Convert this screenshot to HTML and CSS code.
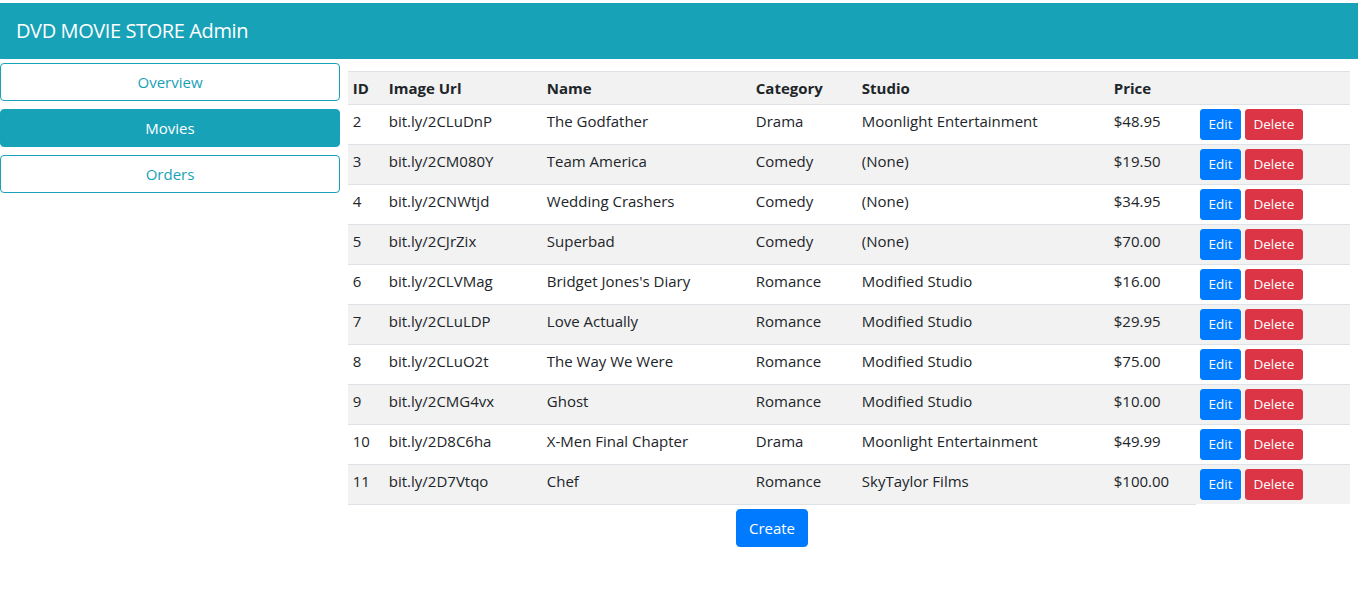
FILE: index.html
```html
<!DOCTYPE html>
<html>
<head>
<meta charset="utf-8">
<link rel="stylesheet" href="styles.css">
</head>
<body>
<div class="page">
  <header class="topbar"><span class="brand">DVD MOVIE STORE Admin</span></header>
  <div class="layout">
    <nav class="side">
      <a class="navbtn outline">Overview</a>
      <a class="navbtn active">Movies</a>
      <a class="navbtn outline">Orders</a>
    </nav>
    <main class="main">
      <table class="tbl">
        <tbody>
          <tr class="head"><th class="c-id">ID</th><th class="c-url">Image Url</th><th class="c-name">Name</th><th class="c-cat">Category</th><th class="c-studio">Studio</th><th class="c-price">Price</th><th class="c-act"></th></tr>
          <tr><td>2</td><td>bit.ly/2CLuDnP</td><td>The Godfather</td><td>Drama</td><td>Moonlight Entertainment</td><td>$48.95</td><td class="acts"><button class="btn-sm edit">Edit</button> <button class="btn-sm del">Delete</button></td></tr>
          <tr><td>3</td><td>bit.ly/2CM080Y</td><td>Team America</td><td>Comedy</td><td>(None)</td><td>$19.50</td><td class="acts"><button class="btn-sm edit">Edit</button> <button class="btn-sm del">Delete</button></td></tr>
          <tr><td>4</td><td>bit.ly/2CNWtjd</td><td>Wedding Crashers</td><td>Comedy</td><td>(None)</td><td>$34.95</td><td class="acts"><button class="btn-sm edit">Edit</button> <button class="btn-sm del">Delete</button></td></tr>
          <tr><td>5</td><td>bit.ly/2CJrZix</td><td>Superbad</td><td>Comedy</td><td>(None)</td><td>$70.00</td><td class="acts"><button class="btn-sm edit">Edit</button> <button class="btn-sm del">Delete</button></td></tr>
          <tr><td>6</td><td>bit.ly/2CLVMag</td><td>Bridget Jones's Diary</td><td>Romance</td><td>Modified Studio</td><td>$16.00</td><td class="acts"><button class="btn-sm edit">Edit</button> <button class="btn-sm del">Delete</button></td></tr>
          <tr><td>7</td><td>bit.ly/2CLuLDP</td><td>Love Actually</td><td>Romance</td><td>Modified Studio</td><td>$29.95</td><td class="acts"><button class="btn-sm edit">Edit</button> <button class="btn-sm del">Delete</button></td></tr>
          <tr><td>8</td><td>bit.ly/2CLuO2t</td><td>The Way We Were</td><td>Romance</td><td>Modified Studio</td><td>$75.00</td><td class="acts"><button class="btn-sm edit">Edit</button> <button class="btn-sm del">Delete</button></td></tr>
          <tr><td>9</td><td>bit.ly/2CMG4vx</td><td>Ghost</td><td>Romance</td><td>Modified Studio</td><td>$10.00</td><td class="acts"><button class="btn-sm edit">Edit</button> <button class="btn-sm del">Delete</button></td></tr>
          <tr><td>10</td><td>bit.ly/2D8C6ha</td><td>X-Men Final Chapter</td><td>Drama</td><td>Moonlight Entertainment</td><td>$49.99</td><td class="acts"><button class="btn-sm edit">Edit</button> <button class="btn-sm del">Delete</button></td></tr>
          <tr><td>11</td><td>bit.ly/2D7Vtqo</td><td>Chef</td><td>Romance</td><td>SkyTaylor Films</td><td>$100.00</td><td class="acts"><button class="btn-sm edit">Edit</button> <button class="btn-sm del">Delete</button></td></tr>
          <tr class="foot"><td colspan="6" class="create-cell"><button class="btn-create">Create</button></td></tr>
        </tbody>
      </table>
    </main>
  </div>
</div>
</body>
</html>
```

FILE: styles.css
```css
* { box-sizing: border-box; }
html, body { margin: 0; padding: 0; background: #fff; }
body {
  font-family: "Open Sans", "Noto Sans", sans-serif;
  font-size: 16px;
  line-height: 1.5;
  color: #212529;
}
.page { padding: 3px 4px 0 0; }
.topbar {
  background: #17a2b8;
  height: 56px;
  display: flex;
  align-items: center;
  padding-left: 16px;
}
.brand { color: #fff; font-size: 20px; letter-spacing: -0.4px; }
.layout { display: flex; gap: 8px; padding-right: 8px; }
.side {
  width: 340px;
  flex: none;
  display: flex;
  flex-direction: column;
  gap: 8px;
  padding-top: 4px;
}
.navbtn {
  display: block;
  height: 38px;
  line-height: 36px;
  text-align: center;
  border: 1px solid #17a2b8;
  border-radius: 4px;
  font-size: 15px;
  cursor: pointer;
}
.navbtn.outline { color: #17a2b8; background: #fff; }
.navbtn.active { color: #fff; background: #17a2b8; }
.main { flex: 1; padding-top: 12px; }
.tbl { width: 100%; border-collapse: collapse; font-size: 15px; line-height: 24px; }
.tbl th, .tbl td {
  padding: 4px 4.8px;
  border-top: 1px solid #dee2e6;
  text-align: left;
  vertical-align: top;
  white-space: nowrap;
}
.tbl th { font-weight: 700; }
.tbl tbody tr:nth-child(odd) { background: #f2f2f2; }
.tbl tr.foot { background: #fff !important; }
.c-id { width: 36px; }
.c-url { width: 158px; }
.c-name { width: 209px; }
.c-cat { width: 106px; }
.c-studio { width: 252px; }
.c-price { width: 87px; }
.acts { padding-left: 4px !important; line-height: 31px !important; font-size: 0 !important; }
.btn-sm {
  font-family: "Open Sans", "Noto Sans", sans-serif;
  font-size: 13.5px;
  line-height: 21px;
  height: 31px;
  padding: 4px 7.5px;
  margin-right: 4px;
  border: 1px solid transparent;
  border-radius: 3px;
  color: #fff;
  cursor: pointer;
  vertical-align: top;
}
.edit { background: #007bff; border-color: #007bff; }
.del { background: #dc3545; border-color: #dc3545; }
.create-cell { text-align: center !important; }
.btn-create {
  font-family: inherit;
  font-size: 15px;
  line-height: 24px;
  padding: 6px 12px;
  border: 1px solid #007bff;
  background: #007bff;
  color: #fff;
  border-radius: 4px;
  vertical-align: top;
}
```
